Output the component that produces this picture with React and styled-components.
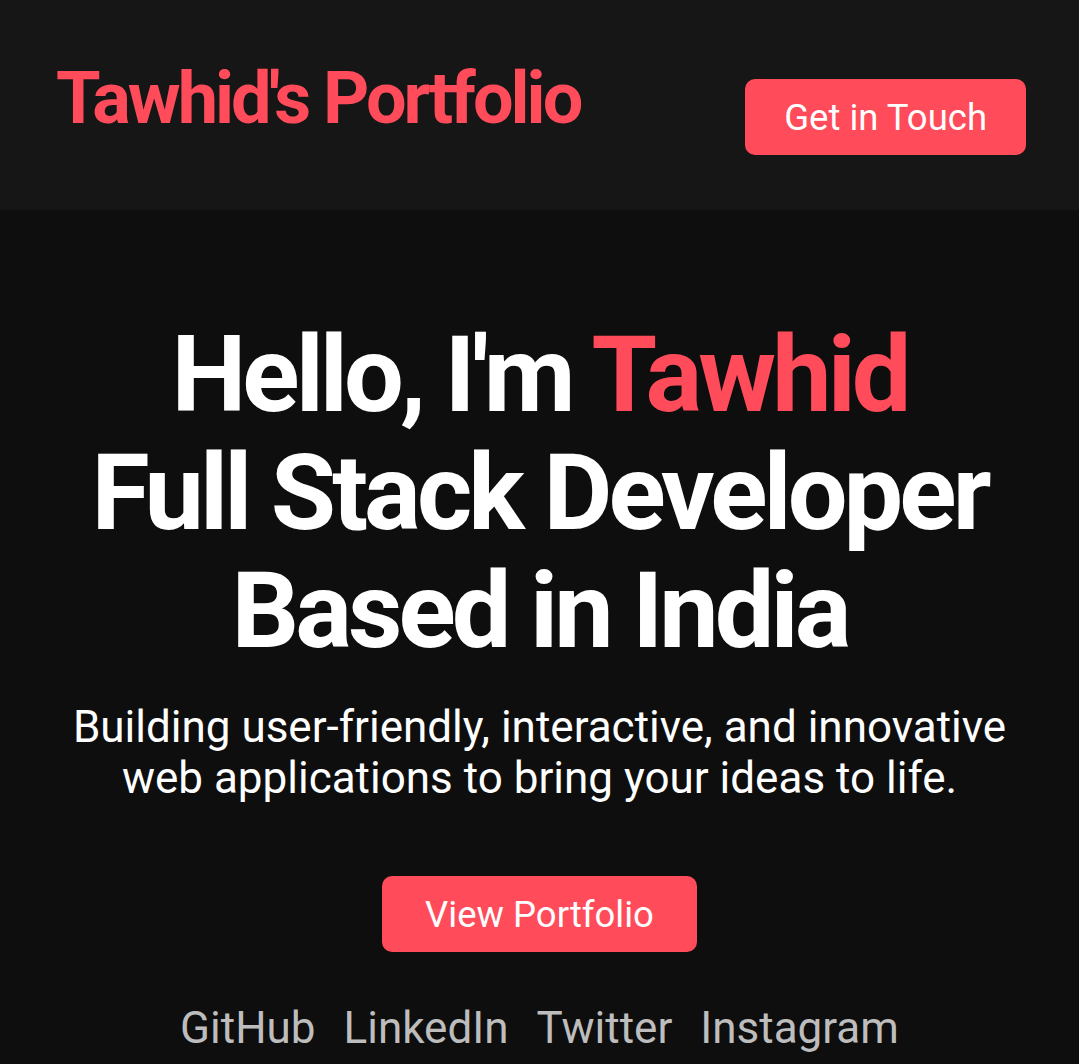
import React from 'react';
import styled, { createGlobalStyle } from 'styled-components';

const GlobalStyle = createGlobalStyle`
  html, body {
    margin: 0;
    padding: 0;
    background: #0e0e0e;
  }
  body {
    font-family: Roboto, "Liberation Sans", Arial, sans-serif;
    color: #fff;
  }
`;

const Page = styled.div`
  min-height: 100vh;
  background: #0e0e0e;
`;

const Header = styled.header`
  display: flex;
  justify-content: space-between;
  align-items: flex-start;
  padding: 57px 53px 55px 56px;
  background: #161616;
`;

const Logo = styled.h1`
  margin: 0;
  font-size: 72px;
  line-height: 84px;
  font-weight: 700;
  letter-spacing: -3px;
  color: #ff4b5a;
`;

const Button = styled.button`
  margin-top: ${props => props.offset || 0}px;
  height: 76px;
  padding: 0 ${props => props.padX || 40}px;
  border: none;
  border-radius: 10px;
  background: #ff4b5a;
  color: #fff;
  font-family: Roboto, "Liberation Sans", Arial, sans-serif;
  font-size: 36.5px;
  cursor: pointer;
`;

const Hero = styled.section`
  display: flex;
  flex-direction: column;
  align-items: center;
  text-align: center;
  padding: 106px 40px 0;
`;

const Heading = styled.h2`
  margin: 0;
  font-size: 106px;
  line-height: 118px;
  font-weight: 700;
  letter-spacing: -3.9px;
  color: #fff;
`;

const Accent = styled.span`
  color: #ff4b5a;
`;

const Tagline = styled.p`
  margin: 32px 0 0;
  max-width: 970px;
  font-size: 44px;
  line-height: 51px;
  color: #fff;
`;

const Socials = styled.nav`
  display: flex;
  gap: 28px;
  margin-top: 50px;
`;

const SocialLink = styled.a`
  font-size: 44px;
  color: #bdbdbd;
  text-decoration: none;
`;

const links = ['GitHub', 'LinkedIn', 'Twitter', 'Instagram'];

const App = () => {
  return (
    <Page>
      <GlobalStyle />
      <Header>
        <Logo>Tawhid's Portfolio</Logo>
        <Button offset={22} padX={39}>Get in Touch</Button>
      </Header>
      <Hero>
        <Heading>
          Hello, I'm <Accent>Tawhid</Accent>
          <br />
          Full Stack Developer
          <br />
          Based in India
        </Heading>
        <Tagline>
          Building user-friendly, interactive, and innovative web applications to bring your ideas to life.
        </Tagline>
        <Button offset={72} padX={43.5}>View Portfolio</Button>
        <Socials>
          {links.map(link => (
            <SocialLink key={link} href="#">{link}</SocialLink>
          ))}
        </Socials>
      </Hero>
    </Page>
  );
};

export default App;
